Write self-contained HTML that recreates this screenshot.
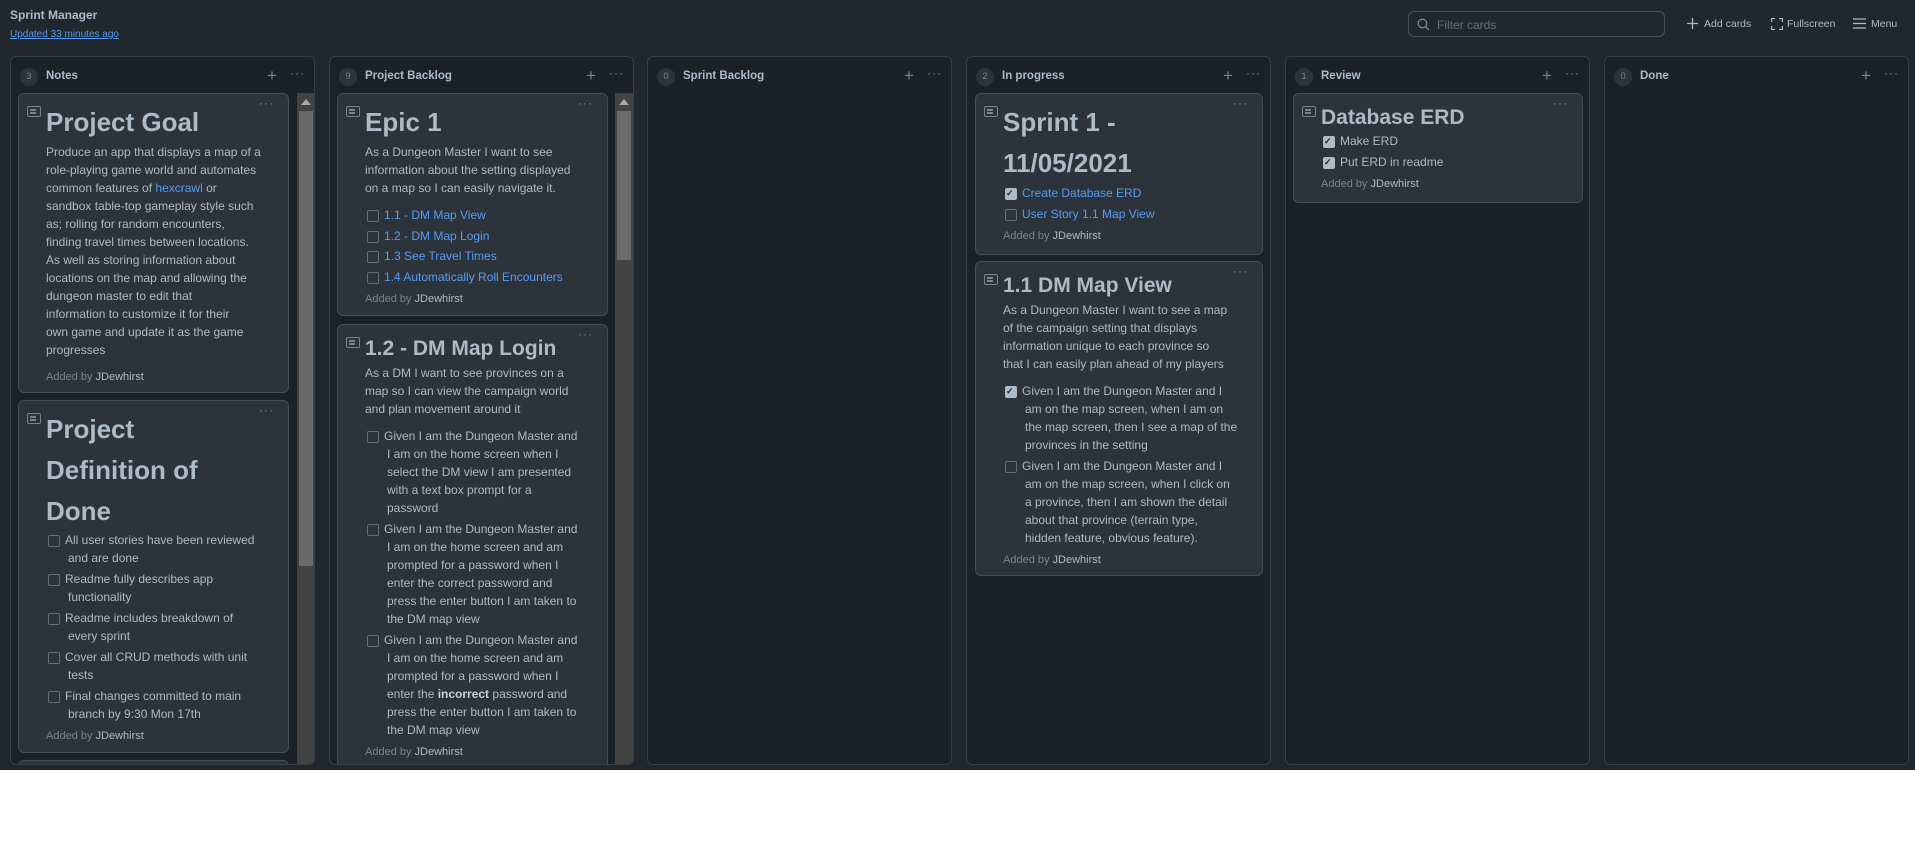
<!DOCTYPE html>
<html><head><meta charset="utf-8"><style>
*{box-sizing:border-box;margin:0;padding:0}
html,body{width:1915px;height:843px;background:#fff;overflow:hidden;font-family:"Liberation Sans",sans-serif;color:#adbac7}
#app{position:absolute;left:0;top:0;width:1915px;height:770px;background:#22272e}
.t1{position:absolute;left:10px;top:8px;font-size:12px;font-weight:bold;color:#adbac7}
.t2{position:absolute;left:10px;top:29px;font-size:10px;color:#539bf5;text-decoration:underline}
.filter{position:absolute;left:1408px;top:11px;width:257px;height:26px;border:1px solid #444c56;border-radius:6px;background:#22272e}
.filter span{position:absolute;left:28px;top:6px;font-size:12px;color:#636e7b}
.tb{position:absolute;top:18px;font-size:10.5px;color:#adbac7}
.col{position:absolute;top:56px;width:305px;height:709px;background:#1c2128;border:1px solid #373e47;border-radius:6px;overflow:hidden}
.ch{position:absolute;left:0;top:8px;height:24px;width:100%}
.badge{position:absolute;left:9px;top:3px;width:18px;height:18px;border-radius:50%;background:#2d333b;color:#768390;font-size:9.5px;text-align:center;line-height:18px}
.cn{position:absolute;left:35px;top:5px;font-size:11.5px;font-weight:bold;color:#adbac7}
.plus{position:absolute;top:3px;font-size:17px;color:#768390;line-height:16px}
.dots{position:absolute;top:1px;font-size:12px;color:#768390;letter-spacing:1px}
.card{position:absolute;background:#2d333b;border:1px solid #444c56;border-radius:6px;padding:8px 8px 7px 27px;overflow:hidden}
.card .ic{position:absolute;left:8px;top:12px;width:14px;height:11px;border:1.5px solid #768390;border-radius:2px}
.card .ic:after{content:"";position:absolute;left:2px;top:2px;width:6px;height:1.5px;background:#768390;box-shadow:0 3px 0 #768390}
.card .cd{position:absolute;right:14px;top:2px;font-size:12px;color:#768390;letter-spacing:1px}
h1{font-size:26px;line-height:41px;font-weight:bold;color:#adbac7;white-space:nowrap}
h2{font-size:21px;line-height:31px;font-weight:bold;color:#adbac7;white-space:nowrap}
p{font-size:12px;line-height:18px;white-space:nowrap}
ul{list-style:none;margin-top:9px}
ul.nm{margin-top:0}
li{position:relative;font-size:12px;line-height:18px;padding-left:19px;margin-bottom:2.7px;white-space:nowrap}
li .w{padding-left:3px}
li:before{content:"";position:absolute;left:2px;top:4px;width:10px;height:10px;border:1px solid #636e7b;border-radius:2px;background:#2d333b}
li.c:before{background:#adbac7;border-color:#adbac7}
li.c:after{content:"✓";position:absolute;left:3px;top:0;font-size:9px;color:#22272e;font-weight:bold}
a{color:#539bf5;text-decoration:none}
.ad{font-size:11px;line-height:18px;margin-top:7px;color:#768390}
.ad b{font-weight:normal;color:#adbac7}
.sb{position:absolute;top:36px;width:18px;height:707px;background:#424242}
.sb .th{position:absolute;left:2px;width:14px;background:#6a6a6a}
.sb .up{position:absolute;left:4px;top:6px;width:0;height:0;border-left:5px solid transparent;border-right:5px solid transparent;border-bottom:6px solid #a8a8a8}
.sb .dn{position:absolute;left:4px;top:690px;width:0;height:0;border-left:5px solid transparent;border-right:5px solid transparent;border-top:6px solid #e8e8e8}
</style></head><body><div id="app">
<div class="t1">Sprint Manager</div>
<div class="t2">Updated 33 minutes ago</div>
<div class="filter"><svg style="position:absolute;left:8px;top:6px" width="13" height="13" viewBox="0 0 13 13"><circle cx="5.5" cy="5.5" r="4.3" fill="none" stroke="#768390" stroke-width="1.3"/><path d="M8.7 8.7L12 12" stroke="#768390" stroke-width="1.3"/></svg><span>Filter cards</span></div>
<svg style="position:absolute;left:1687px;top:18px" width="11" height="11"><path d="M5.5 0v11M0 5.5h11" stroke="#adbac7" stroke-width="1.3"/></svg>
<div class="tb" style="left:1704px">Add cards</div>
<svg style="position:absolute;left:1771px;top:18px" width="12" height="12" fill="none" stroke="#adbac7" stroke-width="1.3"><path d="M0.5 4V0.5H4M8 0.5h3.5V4M11.5 8v3.5H8M4 11.5H0.5V8"/></svg>
<div class="tb" style="left:1787px">Fullscreen</div>
<svg style="position:absolute;left:1853px;top:18px" width="13" height="11" stroke="#adbac7" stroke-width="1.3"><path d="M0 1h13M0 5.5h13M0 10h13"/></svg>
<div class="tb" style="left:1871px">Menu</div>

<div class="col" style="left:10px">
<div class="ch"><div class="badge">3</div><div class="cn">Notes</div><div class="plus" style="left:256px">+</div><div class="dots" style="left:279px">···</div></div>
<div class="card" style="left:7px;top:36px;width:271px;height:300px"><div class="ic"></div><div class="cd">···</div>
<h1>Project Goal</h1>
<p>Produce an app that displays a map of a<br>role-playing game world and automates<br>common features of <a>hexcrawl</a> or<br>sandbox table-top gameplay style such<br>as; rolling for random encounters,<br>finding travel times between locations.<br>As well as storing information about<br>locations on the map and allowing the<br>dungeon master to edit that<br>information to customize it for their<br>own game and update it as the game<br>progresses</p>
<div class="ad" style="margin-top:9px">Added by <b>JDewhirst</b></div></div>
<div class="card" style="left:7px;top:343px;width:271px;height:353px"><div class="ic"></div><div class="cd">···</div>
<h1>Project<br>Definition of<br>Done</h1>
<ul class="nm" style="margin-top:-1px"><li style="margin-bottom:3px">All user stories have been reviewed<br><span class="w">and are done</span></li>
<li style="margin-bottom:3px">Readme fully describes app<br><span class="w">functionality</span></li>
<li style="margin-bottom:3px">Readme includes breakdown of<br><span class="w">every sprint</span></li>
<li style="margin-bottom:3px">Cover all CRUD methods with unit<br><span class="w">tests</span></li>
<li>Final changes committed to main<br><span class="w">branch by 9:30 Mon 17th</span></li></ul>
<div class="ad" style="margin-top:4px">Added by <b>JDewhirst</b></div></div>
<div class="card" style="left:7px;top:703px;width:271px;height:40px"></div>
<div class="sb" style="left:286px"><div class="up"></div><div class="th" style="top:18px;height:455px"></div><div class="dn"></div></div>
</div>

<div class="col" style="left:329px">
<div class="ch"><div class="badge">9</div><div class="cn">Project Backlog</div><div class="plus" style="left:256px">+</div><div class="dots" style="left:279px">···</div></div>
<div class="card" style="left:7px;top:36px;width:271px;height:223px"><div class="ic"></div><div class="cd">···</div>
<h1>Epic 1</h1>
<p>As a Dungeon Master I want to see<br>information about the setting displayed<br>on a map so I can easily navigate it.</p>
<ul><li><a>1.1 - DM Map View</a></li><li><a>1.2 - DM Map Login</a></li><li><a>1.3 See Travel Times</a></li><li><a>1.4 Automatically Roll Encounters</a></li></ul>
<div class="ad" style="margin-top:4px">Added by <b>JDewhirst</b></div></div>
<div class="card" style="left:7px;top:267px;width:271px;height:460px"><div class="ic"></div><div class="cd">···</div>
<h2>1.2 - DM Map Login</h2>
<p>As a DM I want to see provinces on a<br>map so I can view the campaign world<br>and plan movement around it</p>
<ul><li style="margin-bottom:3px">Given I am the Dungeon Master and<br><span class="w">I am on the home screen when I</span><br><span class="w">select the DM view I am presented</span><br><span class="w">with a text box prompt for a</span><br><span class="w">password</span></li>
<li style="margin-bottom:3px">Given I am the Dungeon Master and<br><span class="w">I am on the home screen and am</span><br><span class="w">prompted for a password when I</span><br><span class="w">enter the correct password and</span><br><span class="w">press the enter button I am taken to</span><br><span class="w">the DM map view</span></li>
<li>Given I am the Dungeon Master and<br><span class="w">I am on the home screen and am</span><br><span class="w">prompted for a password when I</span><br><span class="w">enter the <b style="color:#c5d1de">incorrect</b> password and</span><br><span class="w">press the enter button I am taken to</span><br><span class="w">the DM map view</span></li></ul>
<div class="ad" style="margin-top:4px">Added by <b>JDewhirst</b></div></div>
<div class="sb" style="left:285px"><div class="up"></div><div class="th" style="top:18px;height:149px"></div><div class="dn"></div></div>
</div>

<div class="col" style="left:647px">
<div class="ch"><div class="badge">0</div><div class="cn">Sprint Backlog</div><div class="plus" style="left:256px">+</div><div class="dots" style="left:279px">···</div></div>
</div>

<div class="col" style="left:966px">
<div class="ch"><div class="badge">2</div><div class="cn">In progress</div><div class="plus" style="left:256px">+</div><div class="dots" style="left:279px">···</div></div>
<div class="card" style="left:8px;top:36px;width:288px;height:162px"><div class="ic"></div><div class="cd">···</div>
<h1>Sprint 1 -<br>11/05/2021</h1>
<ul class="nm"><li class="c"><a>Create Database ERD</a></li><li><a>User Story 1.1 Map View</a></li></ul>
<div class="ad" style="margin-top:4px">Added by <b>JDewhirst</b></div></div>
<div class="card" style="left:8px;top:204px;width:288px;height:315px"><div class="ic"></div><div class="cd">···</div>
<h2>1.1 DM Map View</h2>
<p>As a Dungeon Master I want to see a map<br>of the campaign setting that displays<br>information unique to each province so<br>that I can easily plan ahead of my players</p>
<ul><li class="c" style="margin-bottom:3px">Given I am the Dungeon Master and I<br><span class="w">am on the map screen, when I am on</span><br><span class="w">the map screen, then I see a map of the</span><br><span class="w">provinces in the setting</span></li>
<li>Given I am the Dungeon Master and I<br><span class="w">am on the map screen, when I click on</span><br><span class="w">a province, then I am shown the detail</span><br><span class="w">about that province (terrain type,</span><br><span class="w">hidden feature, obvious feature).</span></li></ul>
<div class="ad" style="margin-top:4px">Added by <b>JDewhirst</b></div></div>
</div>

<div class="col" style="left:1285px">
<div class="ch"><div class="badge">1</div><div class="cn">Review</div><div class="plus" style="left:256px">+</div><div class="dots" style="left:279px">···</div></div>
<div class="card" style="left:7px;top:36px;width:290px;height:110px"><div class="ic"></div><div class="cd">···</div>
<h2>Database ERD</h2>
<ul class="nm" style="margin-top:-1px"><li class="c">Make ERD</li><li class="c">Put ERD in readme</li></ul>
<div class="ad" style="margin-top:4px">Added by <b>JDewhirst</b></div></div>
</div>

<div class="col" style="left:1604px">
<div class="ch"><div class="badge">0</div><div class="cn">Done</div><div class="plus" style="left:256px">+</div><div class="dots" style="left:279px">···</div></div>
</div>
</div></body></html>
